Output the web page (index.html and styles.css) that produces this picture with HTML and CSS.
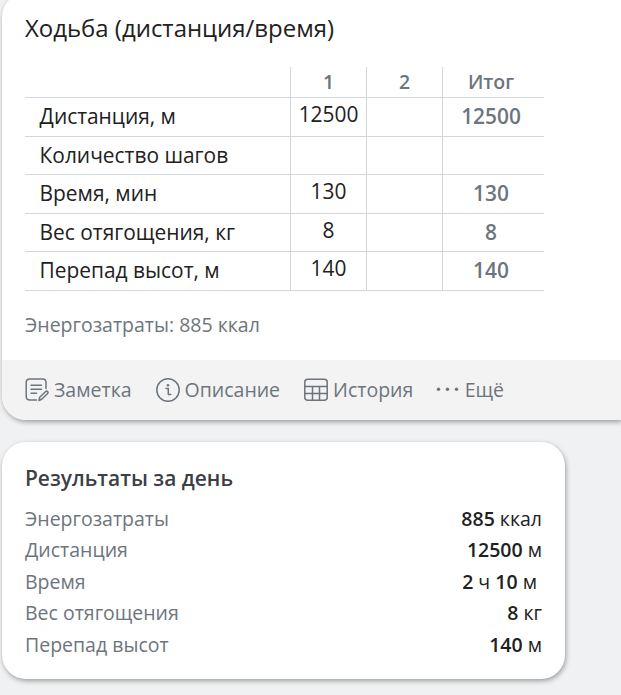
FILE: index.html
```html
<!DOCTYPE html>
<html lang="ru">
<head>
  <meta charset="UTF-8">
  <meta name="viewport" content="width=device-width, initial-scale=1.0">
  <title>Дневник тренировок</title>
  <link rel="stylesheet" href="styles.css">
</head>
<body>

  <!-- Упражнение -->
  <section class="card exercise">
    <div class="exercise-body">
      <h2 class="exercise-title">Ходьба (дистанция/время)</h2>
      <table class="sets">
        <thead>
          <tr><th class="name"></th><th>1</th><th>2</th><th class="total">Итог</th></tr>
        </thead>
        <tbody>
          <tr><td class="name">Дистанция, м</td><td class="value">12500</td><td></td><td class="total">12500</td></tr>
          <tr><td class="name">Количество шагов</td><td></td><td></td><td class="total"></td></tr>
          <tr><td class="name">Время, мин</td><td class="value">130</td><td></td><td class="total">130</td></tr>
          <tr><td class="name">Вес отягощения, кг</td><td class="value">8</td><td></td><td class="total">8</td></tr>
          <tr><td class="name">Перепад высот, м</td><td class="value">140</td><td></td><td class="total">140</td></tr>
        </tbody>
      </table>
      <p class="energy">Энергозатраты: 885 ккал</p>
    </div>

    <div class="actions">
      <a class="action note">
        <svg width="24" height="24" viewBox="0 0 24 24">
          <path d="M11.5 22H5Q1.200 22 1.200 18.500V4.500Q1.200 1 5 1H17.500Q21 1 21 4.500V10.500M6 7.200H16.500M6 11.200H16.500M6 15.200H11.500"/>
          <path d="M14 22.500L14.700 19.200L20.700 13.500Q21.700 12.700 22.600 13.600Q23.500 14.600 22.600 15.500L16.700 21.300Z"/>
        </svg>
        <span>Заметка</span>
      </a>
      <a class="action about">
        <svg width="24" height="24" viewBox="0 0 24 24">
          <circle cx="12" cy="12" r="11.200"/>
          <path d="M10 10.500H12.300V16.500M12.300 16.500H14.800"/>
          <circle class="dot" cx="12" cy="7.300" r="1.300"/>
        </svg>
        <span>Описание</span>
      </a>
      <a class="action history">
        <svg width="24" height="24" viewBox="0 0 24 24">
          <rect x="0.800" y="1.200" width="22.400" height="21" rx="3"/>
          <path d="M1 8.500H23M1 15.500H23M8.500 8.500V22M15.500 8.500V22"/>
        </svg>
        <span>История</span>
      </a>
      <a class="action more">
        <svg width="24" height="24" viewBox="0 0 24 24">
          <circle class="dot" cx="2.500" cy="11.200" r="1.700"/>
          <circle class="dot" cx="11.500" cy="11.200" r="1.700"/>
          <circle class="dot" cx="20.500" cy="11.200" r="1.700"/>
        </svg>
        <span>Ещё</span>
      </a>
    </div>
  </section>

  <!-- Итоги дня -->
  <section class="card results">
    <h3 class="results-title">Результаты за день</h3>
    <div class="result"><span>Энергозатраты</span><span class="amount"><b>885</b> ккал</span></div>
    <div class="result"><span>Дистанция</span><span class="amount"><b>12500</b> м</span></div>
    <div class="result"><span>Время</span><span class="amount"><b>2</b> ч <b>10</b> м&nbsp;</span></div>
    <div class="result"><span>Вес отягощения</span><span class="amount"><b>8</b> кг</span></div>
    <div class="result"><span>Перепад высот</span><span class="amount"><b>140</b> м</span></div>
  </section>

</body>
</html>
```

FILE: styles.css
```css
* {
  box-sizing: border-box;
}

body {
  margin: 0;
  height: 695px;
  overflow: hidden;
  background: #f0f1f3;
  color: #212121;
  font-family: "Open Sans", sans-serif;
  font-size: 19.5px;
}

.card {
  margin-left: 2px;
  background: #fff;
  box-shadow: 1px 2px 5px rgba(0, 0, 0, 0.35);
  overflow: hidden;
}

.exercise {
  height: 427px;
  margin-top: -7px;
  border-radius: 24px 0 0 24px;
}

.exercise-body {
  height: 367px;
  padding: 18px 23px 0;
}

.exercise-title {
  margin: 0;
  font-size: 23.95px;
  font-weight: 400;
  line-height: 34px;
}

.sets {
  width: 519px;
  margin-top: 22px;
  border-collapse: separate;
  border-spacing: 0;
  table-layout: fixed;
}

.sets th,
.sets td {
  width: 76px;
  height: 38.5px;
  padding: 0;
  border-bottom: 1px solid #d5d8db;
  border-left: 1px solid #d5d8db;
  text-align: center;
  line-height: 29px;
}

.sets th {
  height: 31px;
  padding-bottom: 1px;
  color: #6c757d;
  font-weight: 600;
  line-height: 28px;
}

.sets .name {
  width: 265px;
  padding-left: 14.6px;
  padding-bottom: 0.4px;
  border-left: none;
  text-align: left;
  font-size: 20.9px;
}

.sets .value {
  padding-bottom: 4.4px;
  font-size: 20.9px;
}

.sets .total {
  width: 102px;
  padding-right: 5px;
  color: #6c757d;
  font-weight: 600;
}

.sets td.total {
  padding-bottom: 0.4px;
  font-size: 20.9px;
}

.energy {
  margin: 20px 0 0;
  color: #6c757d;
  line-height: 28px;
}

.actions {
  display: flex;
  height: 60px;
  padding: 0 23px;
  background: #f3f3f3;
}

.action {
  display: flex;
  align-items: center;
  gap: 5px;
  margin-right: 24px;
  color: #6c757d;
}

.action.history {
  margin-right: 22.5px;
}

.action span {
  padding-bottom: 1px;
}

.action svg {
  fill: none;
  stroke: #6c757d;
  stroke-width: 1.5;
  stroke-linecap: round;
  stroke-linejoin: round;
}

.action .dot {
  fill: #6c757d;
  stroke: none;
}

.results {
  width: 563px;
  height: 237px;
  margin-top: 22px;
  padding: 20px 23px 0;
  border-radius: 24px;
}

.results-title {
  margin: 0 0 8.7px;
  color: #3d3f47;
  font-size: 20.95px;
  font-weight: 600;
  line-height: 32px;
}

.result {
  display: flex;
  justify-content: space-between;
  height: 31.5px;
  color: #6c757d;
  line-height: 31px;
}

.amount {
  color: #212121;
}

.amount b {
  font-weight: 600;
}
```
